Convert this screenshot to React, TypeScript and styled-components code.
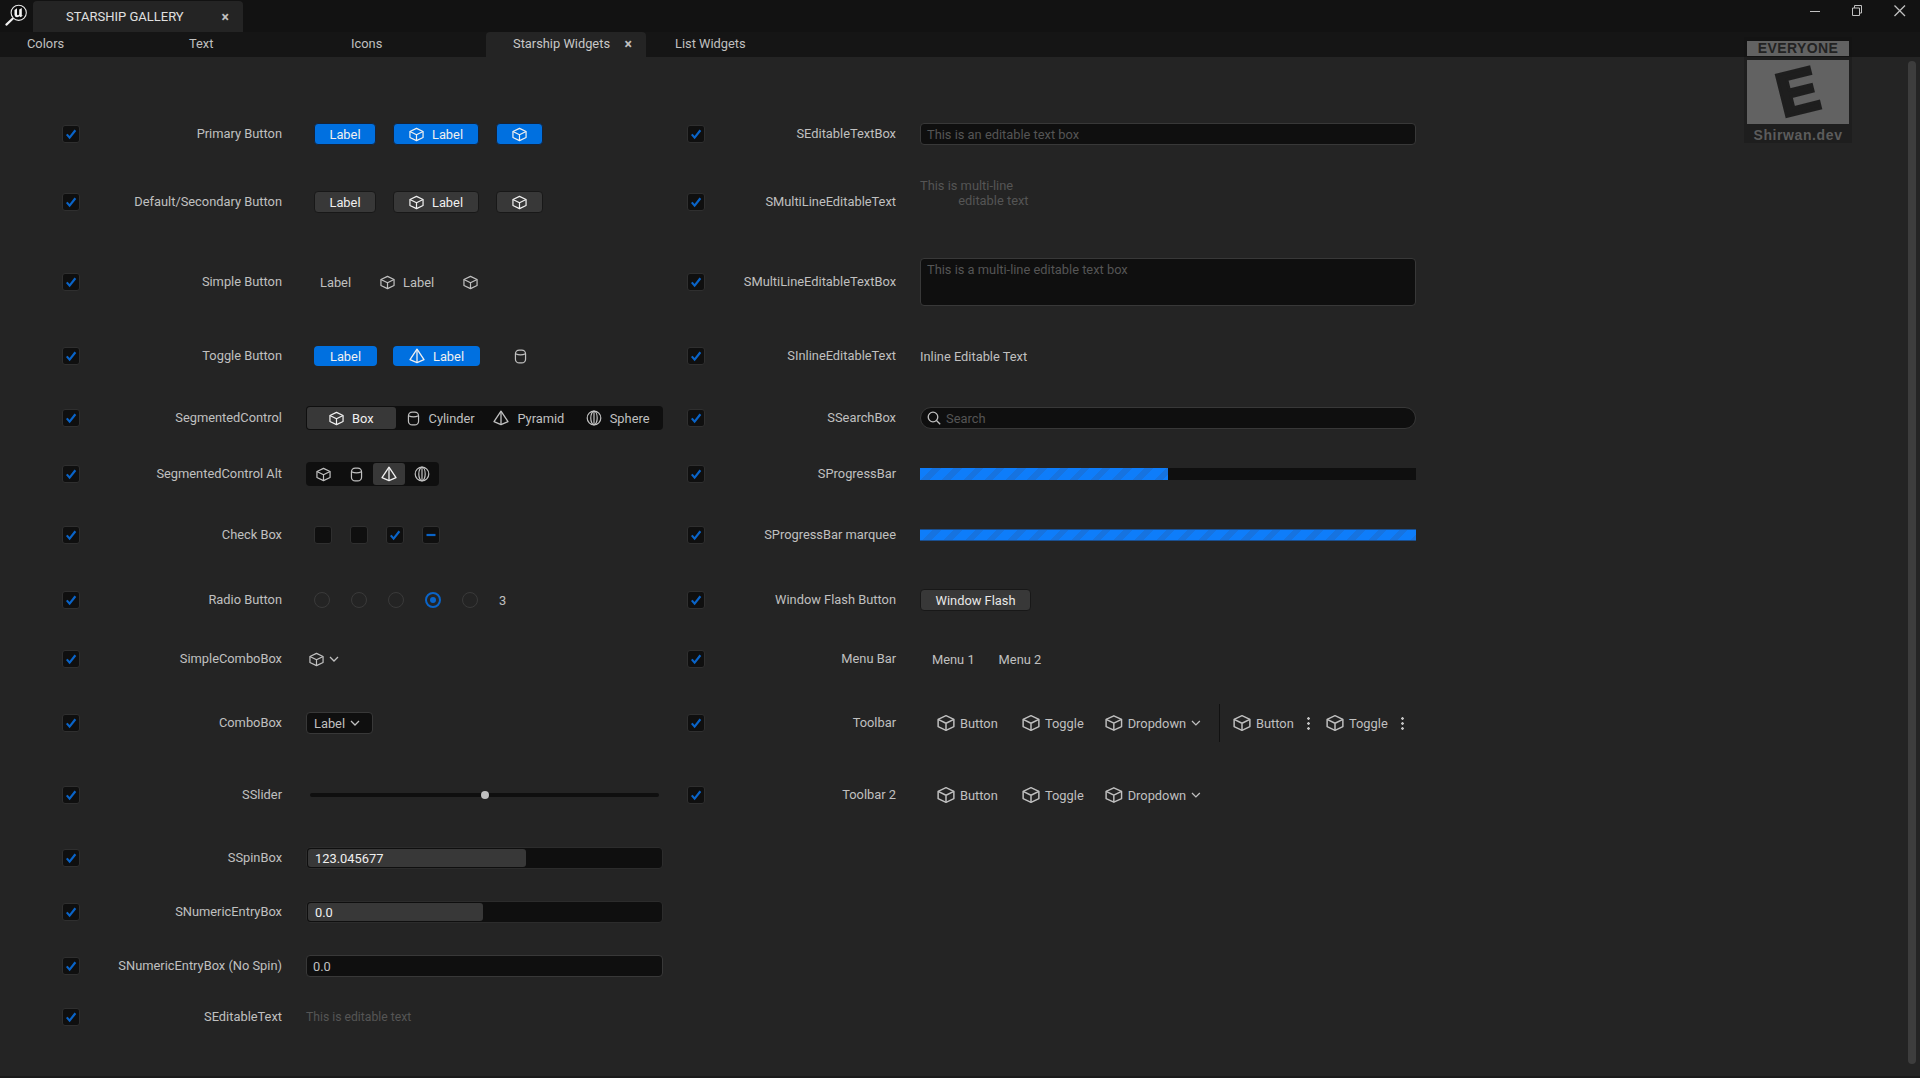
import * as React from 'react';
import styled, { createGlobalStyle } from 'styled-components';

const GlobalStyle = createGlobalStyle`
  html, body {
    margin: 0;
    padding: 0;
    height: 100%;
    background: #242424;
    overflow: hidden;
  }
  body {
    font-family: Roboto, "Liberation Sans", sans-serif;
    font-size: 12.85px;
    color: #c0c0c0;
  }
`;

const Window = styled.div`
  position: relative;
  width: 1920px;
  height: 1078px;
  display: flex;
  flex-direction: column;
  box-sizing: border-box;
  border-bottom: 2px solid #1a1a1a;
  overflow: hidden;
`;

/* title bar */
const TitleBar = styled.div`
  height: 32px;
  flex: none;
  display: flex;
  align-items: flex-end;
  background: #121212;
`;

const LogoSlot = styled.div`
  width: 33px;
  height: 32px;
  flex: none;
`;

const TitleTab = styled.div`
  width: 210px;
  height: 31px;
  box-sizing: border-box;
  padding: 0 14px 0 33px;
  display: flex;
  align-items: center;
  justify-content: space-between;
  background: #242424;
  border-radius: 4px 4px 0 0;
  color: #e0e0e0;
  font-size: 13px;
`;

const WindowButtons = styled.div`
  margin-left: auto;
  height: 32px;
  display: flex;
  align-items: flex-start;
  padding-right: 13px;
  gap: 30px;
  color: #c0c0c0;
`;

const WinIcon = styled.svg`
  display: block;
  margin-top: 4px;
`;

/* tab row */
const TabRow = styled.div`
  height: 25px;
  flex: none;
  display: flex;
  gap: 2px;
  background: #151515;
`;

const Tab = styled.div<{ $active?: boolean }>`
  width: 160px;
  box-sizing: border-box;
  padding: 0 14px 2px 27px;
  display: flex;
  align-items: center;
  justify-content: space-between;
  border-radius: 4px 4px 0 0;
  color: ${p => (p.$active ? '#c8c8c8' : '#c0c0c0')};
  background: ${p => (p.$active ? '#242424' : 'transparent')};
`;

const Close = styled.span`
  font-size: 14px;
  font-weight: 700;
  color: #c0c0c0;
  line-height: 1;
`;

/* main */
const Main = styled.div`
  flex: 1;
  display: flex;
  min-height: 0;
`;

const Rows = styled.div`
  flex: 1;
  padding: 43px 0 0 62px;
  display: flex;
  flex-direction: column;
`;

const Row = styled.div<{ $h: number }>`
  height: ${p => p.$h}px;
  flex: none;
  display: grid;
  grid-template-columns: 601px 729px;
  column-gap: 24px;
`;

const Pair = styled.div<{ $w: number }>`
  display: grid;
  grid-template-columns: 18px ${p => p.$w}px 1fr;
  align-items: center;
`;

const Name = styled.div`
  text-align: right;
  white-space: nowrap;
  color: #c0c0c0;
  padding-right: 24px;
  margin-top: -1px;
`;

const Control = styled.div`
  display: flex;
  align-items: center;
  min-width: 0;
  white-space: nowrap;
`;

const Scrollbar = styled.div`
  width: 8px;
  height: 1003px;
  margin: 4px 4px 0 0;
  flex: none;
  background: #3d3d3d;
  border-radius: 4px;
`;

/* check box */
const CheckBox = styled.div`
  width: 18px;
  height: 18px;
  box-sizing: border-box;
  border: 1px solid #2f2f2f;
  border-radius: 3px;
  background: #0f0f0f;
  display: flex;
  align-items: center;
  justify-content: center;
  color: #0a64c8;
`;

/* buttons */
const ButtonGroup = styled.div<{ $gap?: number; $left?: number }>`
  display: flex;
  align-items: center;
  gap: ${p => p.$gap ?? 18}px;
  margin-left: ${p => p.$left ?? 8}px;
`;

const Btn = styled.div<{ $kind: 'primary' | 'secondary'; $w: number }>`
  width: ${p => p.$w}px;
  height: 22px;
  box-sizing: border-box;
  display: flex;
  align-items: center;
  justify-content: center;
  gap: 8px;
  border-radius: 4px;
  border: 1px solid ${p => (p.$kind === 'primary' ? '#14233a' : '#181818')};
  background: ${p => (p.$kind === 'primary' ? '#0070e0' : '#383838')};
  color: #f0f0f0;
`;

const ToggleOn = styled.div<{ $w: number }>`
  width: ${p => p.$w}px;
  height: 20px;
  display: flex;
  align-items: center;
  justify-content: center;
  gap: 8px;
  border-radius: 4px;
  background: #0070e0;
  color: #f0f0f0;
`;

const Flat = styled.div<{ $gap?: number; $left?: number }>`
  display: flex;
  align-items: center;
  gap: ${p => p.$gap ?? 8}px;
  margin-left: ${p => p.$left ?? 0}px;
`;

/* segmented */
const Segments = styled.div<{ $wide?: boolean }>`
  height: 24px;
  width: ${p => (p.$wide ? '100%' : '133px')};
  box-sizing: border-box;
  padding: 1px;
  display: grid;
  grid-template-columns: repeat(4, 1fr);
  border-radius: 4px;
  background: #0f0f0f;
`;

const Segment = styled.div<{ $on?: boolean }>`
  display: flex;
  align-items: center;
  justify-content: center;
  gap: 8px;
  border-radius: 3px;
  background: ${p => (p.$on ? '#383838' : 'transparent')};
  color: ${p => (p.$on ? '#f0f0f0' : '#c0c0c0')};
`;

/* radio */
const Radio = styled.div<{ $on?: boolean }>`
  width: 16px;
  height: 16px;
  box-sizing: border-box;
  border-radius: 50%;
  border: ${p => (p.$on ? '2px solid #0a64c8' : '1.5px solid #3a3a3a')};
  display: flex;
  align-items: center;
  justify-content: center;
  &::after {
    content: '';
    display: ${p => (p.$on ? 'block' : 'none')};
    width: 6px;
    height: 6px;
    border-radius: 50%;
    background: #0a64c8;
  }
`;

/* combo */
const Combo = styled.div`
  width: 67px;
  height: 22px;
  box-sizing: border-box;
  padding-left: 7px;
  display: flex;
  align-items: center;
  gap: 5px;
  background: #0f0f0f;
  border: 1px solid #383838;
  border-radius: 4px;
`;

/* slider */
const Slider = styled.div`
  position: relative;
  width: 349px;
  height: 4px;
  margin-left: 4px;
  border-radius: 2px;
  background: #0f0f0f;
`;

const Thumb = styled.div`
  position: absolute;
  top: -2px;
  left: 171px;
  width: 8px;
  height: 8px;
  border-radius: 50%;
  background: #c0c0c0;
`;

/* fields */
const Field = styled.div<{ $h?: number; $round?: boolean }>`
  width: 100%;
  height: ${p => p.$h ?? 22}px;
  box-sizing: border-box;
  padding: 0 6px;
  display: flex;
  align-items: center;
  gap: 5px;
  background: #0f0f0f;
  border: 1px solid #383838;
  border-radius: ${p => (p.$round ? '11px' : '4px')};
  color: #555;
`;

const TallField = styled(Field)`
  align-items: flex-start;
  padding-top: 3px;
`;

const Spin = styled.div`
  width: 100%;
  height: 22px;
  box-sizing: border-box;
  padding: 1px;
  background: #0f0f0f;
  border: 1px solid #2c2c2c;
  border-radius: 4px;
`;

const SpinFill = styled.div<{ $w: number }>`
  width: ${p => p.$w}px;
  height: 100%;
  box-sizing: border-box;
  padding-left: 7px;
  display: flex;
  align-items: center;
  background: #383838;
  border-radius: 3px;
  color: #f0f0f0;
`;

const NoSpinField = styled(Field)`
  color: #c0c0c0;
`;

const Hint = styled.div`
  color: #555;
  font-size: 12.2px;
  line-height: 15px;
`;

const MultiHint = styled(Hint)`
  margin-top: -18px;
  font-size: 12.85px;
  white-space: pre;
`;

/* progress */
const Progress = styled.div`
  width: 100%;
  height: 12px;
  background: #0f0f0f;
`;

const ProgressFill = styled.div<{ $pct: number; $edge?: boolean }>`
  width: ${p => p.$pct}%;
  height: 100%;
  box-sizing: border-box;
  border-top: ${p => (p.$edge ? '1px solid #1a4f8f' : 'none')};
  border-bottom: ${p => (p.$edge ? '1px solid #1a4f8f' : 'none')};
  background: repeating-linear-gradient(
    135deg,
    #0e7dfa 0 9px,
    #1673e0 9px 15px
  );
`;

const FlashButton = styled.div`
  width: 111px;
  height: 22px;
  box-sizing: border-box;
  display: flex;
  align-items: center;
  justify-content: center;
  background: #383838;
  border: 1px solid #181818;
  border-radius: 4px;
  color: #e8e8e8;
`;

const Menu = styled.div`
  display: flex;
  gap: 24px;
  margin-left: 12px;
`;

/* toolbar */
const Toolbar = styled.div`
  display: flex;
  align-items: center;
  margin-left: 17px;
`;

const ToolItem = styled.div<{ $w: number }>`
  width: ${p => p.$w}px;
  flex: none;
  display: flex;
  align-items: center;
  gap: 5px;
`;

const ToolSep = styled.div`
  width: 1px;
  height: 38px;
  margin: 0 13px 0 18px;
  background: #111;
`;

const Dots = styled.div`
  width: 3px;
  height: 14px;
  margin-left: 8px;
  background: radial-gradient(circle, currentColor 1.2px, transparent 1.5px) 0 0 / 3px 5px repeat-y;
`;

/* watermark */
const Badge = styled.div`
  position: absolute;
  top: 37px;
  right: 68px;
  width: 108px;
  height: 106px;
  box-sizing: border-box;
  padding: 4px 3px 0;
  background: rgba(16, 16, 16, 0.3);
  font-family: "Liberation Sans", Arial, sans-serif;
  font-weight: 700;
  text-align: center;
  display: flex;
  flex-direction: column;
`;

const BadgeTop = styled.div`
  height: 15px;
  line-height: 15px;
  background: #626262;
  color: #222;
  font-size: 14px;
  letter-spacing: 0.4px;
`;

const BadgeMark = styled.div`
  height: 64px;
  margin-top: 4px;
  background: #626262;
  display: flex;
  align-items: center;
  justify-content: center;
`;

const BadgeLetter = styled.span`
  display: block;
  color: #1e1e1e;
  font-size: 62px;
  line-height: 62px;
  -webkit-text-stroke: 3px #1e1e1e;
  transform: rotate(-14deg);
`;

const BadgeName = styled.div`
  margin-top: 3px;
  color: #5c5c5c;
  font-size: 14px;
  letter-spacing: 0.6px;
`;

type IconProps = { size?: number };

const Cube = ({ size = 15 }: IconProps) => (
  <svg width={size} height={size} viewBox="0 0 16 16" fill="none" stroke="currentColor" strokeWidth="1.3" strokeLinejoin="round">
    <path d="M8 1.5 15 4.8V11.2L8 14.5 1 11.2V4.8Z" />
    <path d="M1 4.8 8 8.2 15 4.8M8 8.2V14.5" />
  </svg>
);

const Cylinder = ({ size = 15 }: IconProps) => (
  <svg width={size} height={size} viewBox="0 0 16 16" fill="none" stroke="currentColor" strokeWidth="1.3">
    <rect x="2.6" y="1.2" width="10.8" height="13.6" rx="4" />
    <path d="M2.6 5Q8 7.6 13.4 5" />
  </svg>
);

const Pyramid = ({ size = 16 }: IconProps) => (
  <svg width={size} height={size} viewBox="0 0 16 16" fill="none" stroke="currentColor" strokeWidth="1.3" strokeLinejoin="round">
    <path d="M8 1.2 15 11.6 8 14.6 1 11.6Z" />
    <path d="M8 1.2V14.6" />
  </svg>
);

const Sphere = ({ size = 16 }: IconProps) => (
  <svg width={size} height={size} viewBox="0 0 16 16" fill="none" stroke="currentColor" strokeWidth="1.2">
    <circle cx="8" cy="8" r="6.8" />
    <ellipse cx="8" cy="8" rx="3.2" ry="6.8" />
    <path d="M8 1.2V14.8" />
  </svg>
);

const Chevron = ({ size = 10 }: IconProps) => (
  <svg width={size} height={size} viewBox="0 0 10 10" fill="none" stroke="currentColor" strokeWidth="1.3">
    <path d="M1 3 5 7 9 3" />
  </svg>
);

const Tick = () => (
  <svg width="12" height="12" viewBox="0 0 12 12" fill="none" stroke="currentColor" strokeWidth="2.2">
    <path d="M1.8 6.4 4.6 9.6 10.4 2.2" />
  </svg>
);

const Dash = () => (
  <svg width="12" height="12" viewBox="0 0 12 12" fill="none" stroke="currentColor" strokeWidth="2.2">
    <path d="M1.5 6H10.5" />
  </svg>
);

const SearchIcon = () => (
  <svg width="14" height="14" viewBox="0 0 14 14" fill="none" stroke="#c0c0c0" strokeWidth="1.3">
    <circle cx="6" cy="6" r="4.8" />
    <path d="M9.5 9.5 13.2 13.2" />
  </svg>
);

const AppLogo = () => (
  <svg width="33" height="32" viewBox="0 0 33 32" fill="none">
    <circle cx="18.7" cy="12.8" r="7.6" fill="#0a0a0a" stroke="#e8e8e8" strokeWidth="1.1" />
    <path
      d="M14.5 10 17 8.2V14.2Q17 15.2 17.9 15.2 18.6 15.2 19.2 14.6V9.6L21.8 8V15.4L23 15.2 20.8 17.2 19.4 16.2Q18.2 17.2 16.8 17.2 14.5 17.2 14.5 14.8Z"
      fill="#f4f4f4"
    />
    <path d="M12.6 18.8 6.4 24.6" stroke="#f0f0f0" strokeWidth="2.2" strokeLinecap="round" />
  </svg>
);

const Check = () => (
  <CheckBox>
    <Tick />
  </CheckBox>
);

const ToolGroup = () => (
  <>
    <ToolItem $w={85}>
      <Cube size={18} /> Button
    </ToolItem>
    <ToolItem $w={83}>
      <Cube size={18} /> Toggle
    </ToolItem>
    <ToolItem $w={96}>
      <Cube size={18} /> Dropdown <Chevron />
    </ToolItem>
  </>
);

type Cell = { name: string; control: React.ReactNode };

type RowData = { h: number; left: Cell; right?: Cell };

const rows: RowData[] = [
  {
    h: 68,
    left: {
      name: 'Primary Button',
      control: (
        <ButtonGroup $gap={17}>
          <Btn $kind="primary" $w={62}>Label</Btn>
          <Btn $kind="primary" $w={86}><Cube /> Label</Btn>
          <Btn $kind="primary" $w={47}><Cube /></Btn>
        </ButtonGroup>
      ),
    },
    right: {
      name: 'SEditableTextBox',
      control: <Field>This is an editable text box</Field>,
    },
  },
  {
    h: 68,
    left: {
      name: 'Default/Secondary Button',
      control: (
        <ButtonGroup $gap={17}>
          <Btn $kind="secondary" $w={62}>Label</Btn>
          <Btn $kind="secondary" $w={86}><Cube /> Label</Btn>
          <Btn $kind="secondary" $w={47}><Cube /></Btn>
        </ButtonGroup>
      ),
    },
    right: {
      name: 'SMultiLineEditableText',
      control: <MultiHint>{'This is multi-line\n            editable text'}</MultiHint>,
    },
  },
  {
    h: 92,
    left: {
      name: 'Simple Button',
      control: (
        <ButtonGroup $gap={29} $left={14}>
          <Flat>Label</Flat>
          <Flat><Cube /> Label</Flat>
          <Flat><Cube /></Flat>
        </ButtonGroup>
      ),
    },
    right: {
      name: 'SMultiLineEditableTextBox',
      control: <TallField $h={48}>This is a multi-line editable text box</TallField>,
    },
  },
  {
    h: 56,
    left: {
      name: 'Toggle Button',
      control: (
        <ButtonGroup $gap={16}>
          <ToggleOn $w={63}>Label</ToggleOn>
          <ToggleOn $w={87}><Pyramid /> Label</ToggleOn>
          <Flat $left={17}><Cylinder /></Flat>
        </ButtonGroup>
      ),
    },
    right: { name: 'SInlineEditableText', control: <div>Inline Editable Text</div> },
  },
  {
    h: 68,
    left: {
      name: 'SegmentedControl',
      control: (
        <Segments $wide>
          <Segment $on><Cube /> Box</Segment>
          <Segment><Cylinder /> Cylinder</Segment>
          <Segment><Pyramid /> Pyramid</Segment>
          <Segment><Sphere /> Sphere</Segment>
        </Segments>
      ),
    },
    right: {
      name: 'SSearchBox',
      control: <Field $round><SearchIcon /> Search</Field>,
    },
  },
  {
    h: 44,
    left: {
      name: 'SegmentedControl Alt',
      control: (
        <Segments>
          <Segment><Cube /></Segment>
          <Segment><Cylinder /></Segment>
          <Segment $on><Pyramid /></Segment>
          <Segment><Sphere /></Segment>
        </Segments>
      ),
    },
    right: {
      name: 'SProgressBar',
      control: <Progress><ProgressFill $pct={50} /></Progress>,
    },
  },
  {
    h: 78,
    left: {
      name: 'Check Box',
      control: (
        <ButtonGroup>
          <CheckBox />
          <CheckBox />
          <CheckBox><Tick /></CheckBox>
          <CheckBox><Dash /></CheckBox>
        </ButtonGroup>
      ),
    },
    right: {
      name: 'SProgressBar marquee',
      control: <Progress><ProgressFill $pct={100} $edge /></Progress>,
    },
  },
  {
    h: 52,
    left: {
      name: 'Radio Button',
      control: (
        <ButtonGroup $gap={21}>
          <Radio />
          <Radio />
          <Radio />
          <Radio $on />
          <Radio />
          <span>3</span>
        </ButtonGroup>
      ),
    },
    right: { name: 'Window Flash Button', control: <FlashButton>Window Flash</FlashButton> },
  },
  {
    h: 66,
    left: {
      name: 'SimpleComboBox',
      control: (
        <ButtonGroup $gap={5} $left={3}>
          <Cube />
          <Chevron />
        </ButtonGroup>
      ),
    },
    right: {
      name: 'Menu Bar',
      control: (
        <Menu>
          <span>Menu 1</span>
          <span>Menu 2</span>
        </Menu>
      ),
    },
  },
  {
    h: 62,
    left: {
      name: 'ComboBox',
      control: <Combo>Label <Chevron /></Combo>,
    },
    right: {
      name: 'Toolbar',
      control: (
        <Toolbar>
          <ToolGroup />
          <ToolSep />
          <ToolItem $w={93}>
            <Cube size={18} /> Button <Dots />
          </ToolItem>
          <ToolItem $w={82}>
            <Cube size={18} /> Toggle <Dots />
          </ToolItem>
        </Toolbar>
      ),
    },
  },
  {
    h: 82,
    left: {
      name: 'SSlider',
      control: (
        <Slider>
          <Thumb />
        </Slider>
      ),
    },
    right: {
      name: 'Toolbar 2',
      control: (
        <Toolbar>
          <ToolGroup />
        </Toolbar>
      ),
    },
  },
  {
    h: 44,
    left: {
      name: 'SSpinBox',
      control: <Spin><SpinFill $w={218}>123.045677</SpinFill></Spin>,
    },
  },
  {
    h: 64,
    left: {
      name: 'SNumericEntryBox',
      control: <Spin><SpinFill $w={175}>0.0</SpinFill></Spin>,
    },
  },
  {
    h: 44,
    left: {
      name: 'SNumericEntryBox (No Spin)',
      control: <NoSpinField>0.0</NoSpinField>,
    },
  },
  {
    h: 58,
    left: { name: 'SEditableText', control: <Hint>This is editable text</Hint> },
  },
];

const Side = ({ cell, w }: { cell: Cell; w: number }) => (
  <Pair $w={w}>
    <Check />
    <Name>{cell.name}</Name>
    <Control>{cell.control}</Control>
  </Pair>
);

export default function App() {
  return (
    <Window>
      <GlobalStyle />
      <TitleBar>
        <LogoSlot>
          <AppLogo />
        </LogoSlot>
        <TitleTab>
          STARSHIP GALLERY <Close>×</Close>
        </TitleTab>
        <WindowButtons>
          <WinIcon width="12" height="16" viewBox="0 0 12 16" fill="none" stroke="currentColor">
            <path d="M1 7.5H11" />
          </WinIcon>
          <WinIcon width="12" height="16" viewBox="0 0 12 16" fill="none" stroke="currentColor">
            <path d="M1.5 4H8.5V11.5H1.5ZM3.5 4V1.5H10.5V9H8.5" />
          </WinIcon>
          <WinIcon width="14" height="16" viewBox="0 0 14 16" fill="none" stroke="currentColor" strokeWidth="1.3">
            <path d="M1.5 1.5 12 12M12 1.5 1.5 12" />
          </WinIcon>
        </WindowButtons>
      </TitleBar>
      <TabRow>
        <Tab>Colors</Tab>
        <Tab>Text</Tab>
        <Tab>Icons</Tab>
        <Tab $active>
          Starship Widgets <Close>×</Close>
        </Tab>
        <Tab>List Widgets</Tab>
      </TabRow>
      <Main>
        <Rows>
          {rows.map(r => (
            <Row key={r.left.name} $h={r.h}>
              <Side cell={r.left} w={226} />
              {r.right && <Side cell={r.right} w={215} />}
            </Row>
          ))}
        </Rows>
        <Scrollbar />
      </Main>
      <Badge>
        <BadgeTop>EVERYONE</BadgeTop>
        <BadgeMark>
          <BadgeLetter>E</BadgeLetter>
        </BadgeMark>
        <BadgeName>Shirwan.dev</BadgeName>
      </Badge>
    </Window>
  );
}
